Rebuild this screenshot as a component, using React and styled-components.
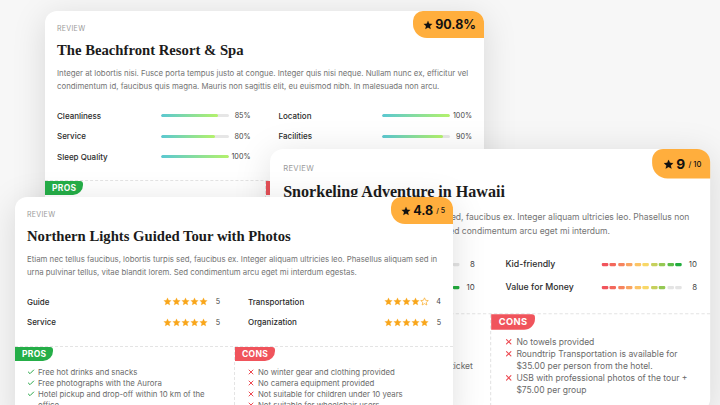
import styled, { createGlobalStyle } from "styled-components";
import { Check, X } from "lucide-react";

const GlobalStyle = createGlobalStyle`
  html, body {
    margin: 0;
    padding: 0;
  }
  body {
    background: #f7f7f7;
    font-family: Inter, "Noto Sans", sans-serif;
  }
`;

const SEGMENT_COLORS = [
  "#f1545c",
  "#f3685c",
  "#f6845e",
  "#f9a461",
  "#fcc465",
  "#f8d867",
  "#c6d05c",
  "#94c853",
  "#5cbd48",
  "#22ad3e",
];

const STAR_PATH =
  "M12 2.2l2.95 6.6 7.15.7-5.4 4.8 1.6 7.05L12 17.7l-6.3 3.65 1.6-7.05-5.4-4.8 7.15-.7z";

function StarIcon({ size = 9, color = "#111", filled = true }) {
  return (
    <svg width={size} height={size} viewBox="0 0 24 24" aria-hidden="true">
      <path
        d={STAR_PATH}
        fill={filled ? color : "none"}
        stroke={color}
        strokeWidth={filled ? 0.5 : 1.8}
        strokeLinejoin="round"
      />
    </svg>
  );
}

function Indicator({ type, value }) {
  if (type === "bar") {
    return (
      <Track>
        <Fill style={{ width: `${value}%` }} />
      </Track>
    );
  }
  if (type === "segments") {
    return (
      <Segments>
        {SEGMENT_COLORS.map((color, i) => (
          <Segment key={i} $color={i < value ? color : "#e4e4e4"} />
        ))}
      </Segments>
    );
  }
  return (
    <Stars>
      {[0, 1, 2, 3, 4].map((i) => (
        <StarIcon key={i} size={9} color="#f9a61a" filled={i < value} />
      ))}
    </Stars>
  );
}

function ReviewCard({
  x,
  y,
  width,
  scale = 1,
  score,
  max,
  title,
  text,
  type,
  valueWidth,
  rowHeight = 20.5,
  metrics,
  pros,
  cons,
}) {
  return (
    <Card $x={x} $y={y} $w={width} $scale={scale}>
      <ScoreBadge>
        <StarIcon size={10} />
        <ScoreValue>{score}</ScoreValue>
        {max && <ScoreMax>/ {max}</ScoreMax>}
      </ScoreBadge>
      <Header>
        <Eyebrow>Review</Eyebrow>
        <Title>{title}</Title>
        <Desc>{text}</Desc>
      </Header>
      <Metrics $row={rowHeight}>
        {metrics.map(({ label, value, shown }) => (
          <MetricRow key={label}>
            <MetricLabel>{label}</MetricLabel>
            <Indicator type={type} value={value} />
            <MetricValue $w={valueWidth}>{shown ?? value}</MetricValue>
          </MetricRow>
        ))}
      </Metrics>
      <Split>
        <Column>
          <Tag $color="#25ae48">Pros</Tag>
          <List>
            {pros.map((item) => (
              <Item key={item}>
                <Check size={8} strokeWidth={3} color="#2aa84a" />
                <span>{item}</span>
              </Item>
            ))}
          </List>
        </Column>
        <Column>
          <Tag $color="#f0545c">Cons</Tag>
          <List>
            {cons.map((item) => (
              <Item key={item}>
                <X size={8} strokeWidth={3} color="#ec4a52" />
                <span>{item}</span>
              </Item>
            ))}
          </List>
        </Column>
      </Split>
    </Card>
  );
}

export default function App() {
  return (
    <Canvas>
      <GlobalStyle />
      <ReviewCard
        x={45}
        y={11}
        width={439}
        score="90.8%"
        title="The Beachfront Resort & Spa"
        text="Integer at lobortis nisi. Fusce porta tempus justo at congue. Integer quis nisi neque. Nullam nunc ex, efficitur vel condimentum id, faucibus quis magna. Mauris non sagittis elit, eu euismod nibh. In malesuada non arcu."
        type="bar"
        valueWidth={22}
        metrics={[
          { label: "Cleanliness", value: 85, shown: "85%" },
          { label: "Location", value: 100, shown: "100%" },
          { label: "Service", value: 80, shown: "80%" },
          { label: "Facilities", value: 90, shown: "90%" },
          { label: "Sleep Quality", value: 100, shown: "100%" },
        ]}
        pros={[
          "Private beach with free sun loungers",
          "Breakfast included",
          "Free Wi-Fi in all rooms",
        ]}
        cons={["Parking is not free", "Pool closes early", "No pets allowed"]}
      />
      <ReviewCard
        x={270}
        y={149}
        width={402}
        scale={1.095}
        score="9"
        max="10"
        title="Snorkeling Adventure in Hawaii"
        text="Etiam nec tellus faucibus, lobortis turpis sed, faucibus ex. Integer aliquam ultricies leo. Phasellus non urna pulvinar tellus, vitae blandit lorem. Sed condimentum arcu eget mi interdum."
        type="segments"
        valueWidth={14}
        rowHeight={21}
        metrics={[
          { label: "Guide", value: 8 },
          { label: "Kid-friendly", value: 10 },
          { label: "Equipment", value: 10 },
          { label: "Value for Money", value: 8 },
        ]}
        pros={[
          "Snorkeling gear included",
          "Free drinks and snacks on board",
          "Includes the marine park entrance fee ticket",
        ]}
        cons={[
          "No towels provided",
          "Roundtrip Transportation is available for $35.00 per person from the hotel.",
          "USB with professional photos of the tour + $75.00 per group",
        ]}
      />
      <ReviewCard
        x={15}
        y={197}
        width={438}
        score="4.8"
        max="5"
        title="Northern Lights Guided Tour with Photos"
        text="Etiam nec tellus faucibus, lobortis turpis sed, faucibus ex. Integer aliquam ultricies leo. Phasellus aliquam sed in urna pulvinar tellus, vitae blandit lorem. Sed condimentum arcu eget mi interdum egestas."
        type="stars"
        valueWidth={12}
        metrics={[
          { label: "Guide", value: 5 },
          { label: "Transportation", value: 4 },
          { label: "Service", value: 5 },
          { label: "Organization", value: 5 },
        ]}
        pros={[
          "Free hot drinks and snacks",
          "Free photographs with the Aurora",
          "Hotel pickup and drop-off within 10 km of the office",
        ]}
        cons={[
          "No winter gear and clothing provided",
          "No camera equipment provided",
          "Not suitable for children under 10 years",
          "Not suitable for wheelchair users",
        ]}
      />
    </Canvas>
  );
}

const Canvas = styled.main`
  position: relative;
  width: 720px;
  height: 405px;
  overflow: hidden;
  background: #f7f7f7;
`;

const Card = styled.article`
  position: absolute;
  left: ${(p) => p.$x}px;
  top: ${(p) => p.$y}px;
  width: ${(p) => p.$w}px;
  transform: scale(${(p) => p.$scale});
  transform-origin: 0 0;
  box-sizing: border-box;
  padding-top: 13px;
  background: #fff;
  border-radius: 12px;
  box-shadow: 0 6px 34px rgba(0, 0, 0, 0.13);
`;

const ScoreBadge = styled.div`
  position: absolute;
  top: 0;
  right: 0;
  display: flex;
  align-items: center;
  gap: 2px;
  height: 27px;
  padding: 0 8px 0 10px;
  background: #ffae3d;
  border-radius: 10px 12px 0 14px;
  color: #111;
`;

const ScoreValue = styled.span`
  font-size: 12.5px;
  font-weight: 700;
`;

const ScoreMax = styled.span`
  font-size: 7px;
  font-weight: 500;
  margin-left: 1px;
`;

const Header = styled.header`
  padding: 0 12px;
`;

const Eyebrow = styled.div`
  font-size: 7px;
  line-height: 10px;
  letter-spacing: 0.3px;
  text-transform: uppercase;
  color: #9a9a9a;
`;

const Title = styled.h2`
  margin: 6px 0 0;
  font-family: "Liberation Serif", "DejaVu Serif", serif;
  font-size: 14.7px;
  line-height: 20px;
  font-weight: 700;
  color: #1b1b1b;
`;

const Desc = styled.p`
  margin: 7px 0 0;
  font-size: 7.8px;
  line-height: 13px;
  color: #747474;
`;

const Metrics = styled.div`
  display: grid;
  grid-template-columns: 1fr 1fr;
  grid-auto-rows: ${(p) => p.$row}px;
  column-gap: 28px;
  margin-top: 12.5px;
  padding: 0 12px;
`;

const MetricRow = styled.div`
  display: flex;
  align-items: center;
`;

const MetricLabel = styled.span`
  flex: 1;
  font-size: 8px;
  font-weight: 500;
  color: #2b2b2b;
`;

const MetricValue = styled.span`
  width: ${(p) => p.$w}px;
  text-align: right;
  font-size: 7.2px;
  color: #444;
`;

const Track = styled.div`
  width: 68px;
  height: 3px;
  border-radius: 2px;
  background: #e6e6e6;
  overflow: hidden;
`;

const Fill = styled.div`
  height: 100%;
  border-radius: 2px;
  background: linear-gradient(90deg, #5ac8d2, #b4f26a);
`;

const Segments = styled.div`
  display: flex;
  gap: 1.5px;
`;

const Segment = styled.span`
  width: 6px;
  height: 3px;
  border-radius: 1px;
  background: ${(p) => p.$color};
`;

const Stars = styled.div`
  display: flex;
  gap: 0;
`;

const Split = styled.div`
  display: grid;
  grid-template-columns: 1fr 1fr;
  margin-top: 13px;
  border-top: 1px dashed #e4e4e4;
`;

const Column = styled.div`
  display: flex;
  flex-direction: column;
  align-items: flex-start;
  padding-bottom: 14px;
  & + & {
    border-left: 1px dashed #e4e4e4;
  }
`;

const Tag = styled.div`
  height: 14px;
  padding: 0 7px;
  line-height: 14px;
  font-size: 8.5px;
  font-weight: 700;
  letter-spacing: 0.3px;
  text-transform: uppercase;
  color: #fff;
  background: ${(p) => p.$color};
  border-radius: 0 3px 10px 0;
`;

const List = styled.ul`
  align-self: stretch;
  margin: 6px 0 0;
  padding: 0 14px 0 12px;
  list-style: none;
`;

const Item = styled.li`
  display: flex;
  align-items: flex-start;
  gap: 3px;
  font-size: 7.8px;
  line-height: 11px;
  color: #6a6a6a;
  svg {
    flex: none;
    margin-top: 1.5px;
  }
`;
